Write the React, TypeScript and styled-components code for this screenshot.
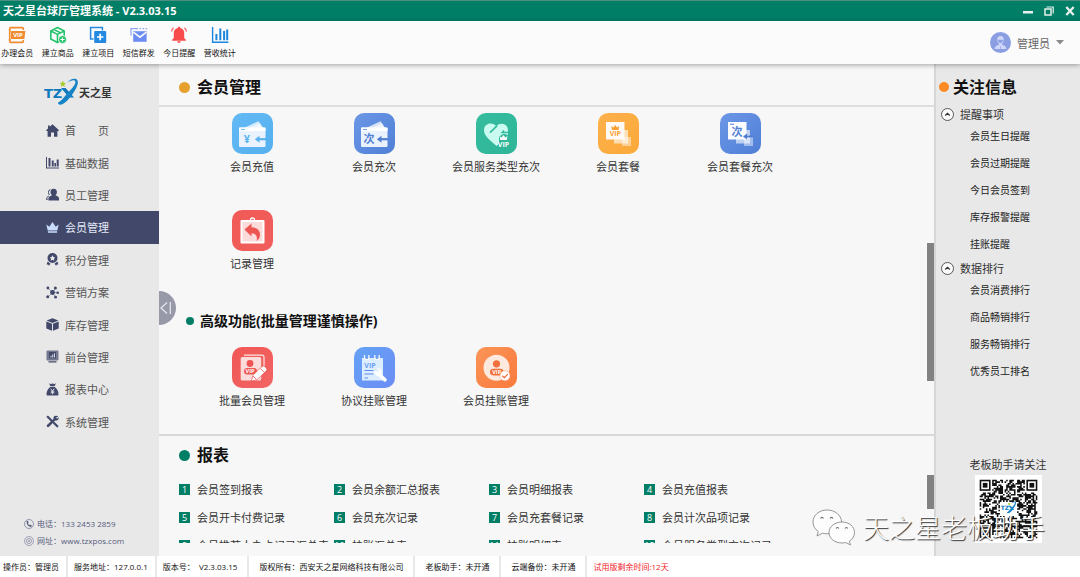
import React from 'react';
import styled, { createGlobalStyle } from 'styled-components';

const GREEN = '#007e66';
const NAVY = '#41486a';

const GlobalStyle = createGlobalStyle`
  * { box-sizing: border-box; }
  body {
    margin: 0;
    font-family: "Open Sans", "Noto Sans CJK SC", sans-serif;
    font-size: 11px;
    color: #333;
    background: #fff;
  }
  button {
    border: 0;
    padding: 0;
    background: none;
    font: inherit;
    color: inherit;
    cursor: pointer;
  }
  a { color: inherit; text-decoration: none; }
  h1, h2, h3, p, ul { margin: 0; padding: 0; }
  ul { list-style: none; }
  svg { display: block; flex: none; }
`;

const Page = styled.div`
  position: relative;
  display: flex;
  flex-direction: column;
  min-height: 100vh;
`;

/* ---------- title bar ---------- */

const TitleBar = styled.header`
  display: flex;
  align-items: center;
  justify-content: space-between;
  height: 21px;
  padding: 0 3px;
  background: ${GREEN};
  border-top: 1px solid #4c8f80;
  color: #fff;
`;

const AppTitle = styled.h1`
  font-size: 11px;
  line-height: 20px;
  font-weight: 700;
  white-space: nowrap;
`;

const WindowButtons = styled.div`
  display: flex;
  gap: 7px;
`;

const WindowButton = styled.button`
  display: flex;
  align-items: center;
  justify-content: center;
  width: 14px;
  height: 16px;
  color: #e8efed;
`;

/* ---------- toolbar ---------- */

const Toolbar = styled.div`
  position: relative;
  z-index: 2;
  display: flex;
  align-items: center;
  justify-content: space-between;
  height: 43px;
  background: #fbfbfb;
  box-shadow: 0 1px 5px rgba(0, 0, 0, 0.35);
`;

const ToolList = styled.div`
  display: grid;
  grid-template-columns: repeat(6, 1fr);
  width: 243px;
  margin-left: -3px;
`;

const Tool = styled.button`
  display: flex;
  flex-direction: column;
  align-items: center;
  gap: 3px;
  font-size: 8px;
  line-height: 12px;
  color: #111;
  white-space: nowrap;
`;

const UserMenu = styled.button`
  display: flex;
  align-items: center;
  gap: 6px;
  margin-right: 16px;
  color: #666;
`;

/* ---------- body ---------- */

const Body = styled.div`
  display: grid;
  grid-template-columns: 159px minmax(0, 1fr) 146px;
  flex: 1;
`;

const Sidebar = styled.aside`
  display: flex;
  flex-direction: column;
  background: #e8e8e8;
`;

const Brand = styled.div`
  display: flex;
  align-items: center;
  height: 50px;
  padding: 5px 0 0 44px;
  font-weight: 600;
  color: #333;
`;

const Nav = styled.nav`
  display: grid;
  grid-auto-rows: 1fr;
  height: 324px;
`;

const NavItem = styled.a<{ $active?: boolean }>`
  display: flex;
  align-items: center;
  gap: 6px;
  padding-left: 46px;
  white-space: pre;
  background: ${(p) => (p.$active ? NAVY : 'transparent')};
  color: ${(p) => (p.$active ? '#e6ebf8' : '#555')};
  svg { color: ${(p) => (p.$active ? '#c9dcff' : NAVY)}; }
`;

const Contact = styled.address`
  display: flex;
  flex-direction: column;
  gap: 5px;
  margin-top: auto;
  padding: 0 0 9px 24px;
  font-style: normal;
  font-size: 8px;
  line-height: 12px;
  color: #555b7c;
`;

const ContactLine = styled.div`
  display: flex;
  align-items: center;
  gap: 3px;
`;

const Main = styled.main`
  position: relative;
  display: flex;
  flex-direction: column;
  padding-top: 5px;
  background: #f7f7f7;
`;

const CollapseHandle = styled.button`
  position: absolute;
  left: 0;
  top: 227px;
  display: flex;
  align-items: center;
  justify-content: flex-start;
  width: 17px;
  height: 34px;
  border-radius: 0 17px 17px 0;
  background: #9799a9;
  color: #e4e5ec;
`;

const SectionTitle = styled.h2`
  display: flex;
  align-items: center;
  gap: 7px;
  padding-left: 20px;
  font-size: 16px;
  line-height: 36px;
  font-weight: 700;
  color: #111;
`;

const Dot = styled.span<{ $color: string; $size: number }>`
  flex: none;
  width: ${(p) => p.$size}px;
  height: ${(p) => p.$size}px;
  border-radius: 50%;
  background: ${(p) => p.$color};
`;

const Scroller = styled.div`
  display: flex;
  justify-content: space-between;
`;

const AppsScroller = styled(Scroller)`
  height: 331px;
  margin-bottom: 1px;
  border-top: 2px solid #dedede;
  border-bottom: 2px solid #d8d8d8;
`;

const ReportsScroller = styled(Scroller)`
  height: 70px;
  padding-top: 2px;
  overflow: hidden;
`;

const ScrollContent = styled.div`
  flex: 1;
`;

const Thumb = styled.div<{ $top: number; $height: number }>`
  width: 7px;
  height: ${(p) => p.$height}px;
  margin-top: ${(p) => p.$top}px;
  background: #828282;
`;

const AppGrid = styled.div`
  display: grid;
  grid-template-columns: repeat(auto-fill, 122px);
  grid-auto-rows: 97px;
  padding: 6px 100px 0 32px;
`;

const AppTile = styled.button`
  display: flex;
  flex-direction: column;
  align-items: center;
  align-self: start;
  gap: 5px;
  line-height: 16px;
  white-space: nowrap;
`;

const SubTitle = styled.h3`
  display: flex;
  align-items: center;
  gap: 6px;
  padding: 0 0 6px 27px;
  font-size: 14px;
  line-height: 28px;
  font-weight: 700;
  color: #111;
`;

const ReportGrid = styled.ul`
  display: grid;
  grid-template-columns: repeat(auto-fill, 155px);
  grid-auto-rows: 28px;
  padding-left: 20px;
`;

const ReportLink = styled.a`
  display: flex;
  align-items: center;
  gap: 7px;
  height: 28px;
  white-space: nowrap;
`;

const ReportNo = styled.span`
  width: 11px;
  height: 11px;
  font-size: 9px;
  line-height: 11px;
  text-align: center;
  color: #fff;
  background: ${GREEN};
`;

/* ---------- right panel ---------- */

const InfoPanel = styled.aside`
  display: flex;
  flex-direction: column;
  padding: 5px 0 13px;
  background: #e8e8e8;
  border-left: 2px solid #d6d6d6;
`;

const InfoTitle = styled.h2`
  display: flex;
  align-items: center;
  gap: 4px;
  padding-left: 3px;
  font-size: 16px;
  line-height: 36px;
  font-weight: 700;
  color: #111;
`;

const GroupButton = styled.button`
  display: flex;
  align-items: center;
  gap: 6px;
  height: 18px;
  padding-left: 5px;
`;

const GroupList = styled.ul`
  padding-left: 34px;
  margin-bottom: 1px;
  font-size: 10px;
  line-height: 27px;
  color: #222;
`;

const FollowCard = styled.section`
  display: flex;
  flex-direction: column;
  align-items: center;
  align-self: center;
  gap: 2px;
  margin-top: auto;
  line-height: 16px;
`;

/* ---------- status bar ---------- */

const StatusBar = styled.footer`
  display: flex;
  height: 21px;
  background: #fff;
  font-size: 8px;
  line-height: 21px;
  color: #111;
  white-space: pre;
`;

const StatusCell = styled.span<{ $left: number; $right?: number; $alert?: boolean }>`
  padding: 0 ${(p) => p.$right ?? 10}px 0 ${(p) => p.$left}px;
  border-right: ${(p) => (p.$alert ? '0' : '2px solid #e8e8e8')};
  color: ${(p) => (p.$alert ? '#f2201c' : 'inherit')};
`;

const Watermark = styled.div`
  position: absolute;
  right: 35px;
  bottom: 30px;
  z-index: 3;
  display: flex;
  align-items: center;
  gap: 8px;
  font-size: 26px;
  line-height: 38px;
  font-weight: 300;
  color: #fff;
  text-shadow: 1px 1px 1px #333;
  white-space: nowrap;
  pointer-events: none;
`;

/* ---------- drawings ---------- */

const VipText = ({ x, y, size, fill }: { x: number; y: number; size: number; fill: string }) => (
  <text x={x} y={y} fontSize={size} fontWeight="700" textAnchor="middle" fill={fill}>VIP</text>
);

const toolIcons = {
  vip: (
    <svg width="18" height="18" viewBox="0 0 18 18">
      <path d="M1.7 5V2.6q0-1 1-1h11.600q1 0 1 1V4M1.7 13v2.400q0 1 1 1h11.600q1 0 1-1V14" fill="none" stroke="#f08c2e" strokeWidth="1.600" />
      <path d="M1.7 3v12" stroke="#f08c2e" strokeWidth="1.600" />
      <path d="M3 5h14.400l-1 8H3z" fill="#f08c2e" />
      <VipText x={10} y={11.4} size={6} fill="#fff" />
    </svg>
  ),
  goods: (
    <svg width="18" height="18" viewBox="0 0 18 18" fill="none" stroke="#23c36b" strokeWidth="1.600" strokeLinejoin="round">
      <path d="M10 15.600l-1.500.9L1.800 13V5L8.500 1.500 15.200 5v5M1.800 5l6.700 3.400L15.200 5M8.500 8.400v8M5 3.500l6.600 3.400" />
      <circle cx="13.500" cy="13.500" r="4" fill="#23c36b" stroke="#fbfbfb" strokeWidth=".8" />
      <path d="M13.500 11.400v4.200M11.400 13.500h4.200" stroke="#fff" strokeWidth="1.100" />
    </svg>
  ),
  project: (
    <svg width="18" height="18" viewBox="0 0 18 18">
      <path d="M4.500 13H1.600V1.600h11.800v3" fill="none" stroke="#2489e0" strokeWidth="1.500" />
      <rect x="5.200" y="5" width="12" height="12" rx="1" fill="#2489e0" />
      <path d="M11.200 7.800v6.400M8 11h6.400" stroke="#fff" strokeWidth="1.700" />
    </svg>
  ),
  sms: (
    <svg width="18" height="18" viewBox="0 0 18 18">
      <path d="M3.200 5.200h13.400v10.600H3.200z" fill="#6d8df2" />
      <path d="M3.400 6.200l6.500 5 6.500-5" fill="none" stroke="#fbfbfb" strokeWidth="1.500" />
      <path d="M1 9.500V2.600h7M9.500 2.600h1.600M12.600 2.600h1.600M15.600 2.600h1.600" fill="none" stroke="#8fa5f3" strokeWidth="1.300" />
    </svg>
  ),
  bell: (
    <svg width="18" height="18" viewBox="0 0 18 18">
      <path d="M9 .8c.8 0 1.200.5 1.200 1.200 2.700.6 4 2.500 4 5V12l1.600 1.800v1H2.200v-1L3.800 12V7c0-2.500 1.300-4.400 4-5 0-.7.4-1.200 1.200-1.200z" fill="#f84c4c" />
      <path d="M7 15.300h4q-.5 1.700-2 1.700t-2-1.700z" fill="#f84c4c" />
      <path d="M3.600 1.800Q1.900 3.200 1.500 5.600M14.400 1.800q1.700 1.400 2.100 3.800" fill="none" stroke="#fa6a6a" strokeWidth="1.300" />
    </svg>
  ),
  stats: (
    <svg width="18" height="18" viewBox="0 0 18 18" fill="none" stroke="#1b86dc">
      <path d="M1.600 1v15.300h15.800" strokeWidth="1.400" />
      <path d="M5.400 8v6.200M9.300 2.500v11.700M13.100 5v9.200M16.200 3.500v10.700" strokeWidth="2" />
    </svg>
  ),
};

const NavSvg = ({ children }: { children: React.ReactNode }) => (
  <svg width="13" height="13" viewBox="0 0 13 13" fill="currentColor">{children}</svg>
);

const navIcons = {
  home: <NavSvg><path d="M6.500.3L13 6.200l-.7.9h-.9v5.600H8V8.600H5v4.100H1.600V7.100H.7L0 6.200l2-1.800V1.500h1.800v1.300z" /></NavSvg>,
  data: (
    <NavSvg>
      <path d="M0 1h1v10.500h12v1H0z" />
      <path d="M2.500 2h2v8.600h-2zM5.800 4.500h1.900v6.100H5.800zM8.400 7H10v3.600H8.400zM10.700 3.500h2v7.100h-2z" />
    </NavSvg>
  ),
  staff: (
    <NavSvg>
      <path d="M7.700.8c2.200 0 3.200 1.400 3.200 3.100 0 1.300-.5 2.300-1.200 2.900v.8c2.100.6 3.300 1.500 3.300 3v1.800H2.400v-1.800c0-1.500 1.300-2.400 3.400-3v-.8C5 6.200 4.500 5.200 4.500 3.900 4.500 2.200 5.500.8 7.700.8z" />
      <path d="M4.400 1.500Q2.200 2 2.500 4.500 2.600 6 3.400 7M2.800 8Q.5 8.800.5 11.500h1.200" fill="none" stroke="currentColor" strokeWidth="1" />
    </NavSvg>
  ),
  crown: <NavSvg><path d="M.3 3.600l3 2.200L6.500 1l3.200 4.800 3-2.200-1.400 6H1.700zM1.900 10.300h9.200v1.500H1.900z" /></NavSvg>,
  points: (
    <NavSvg>
      <path fillRule="evenodd" d="M6.500 0a5 5 0 110 10 5 5 0 010-10zm0 2.300L5.600 4.100l-1.900.3L5 5.800l-.3 1.900 1.800-.9 1.800.9L8 5.800l1.300-1.400-1.900-.3z" />
      <path d="M1.700 8.500l2.800 2.300-1.600 1.900-.8-1.300-1.600.1zM11.300 8.500l-2.800 2.300 1.600 1.900.8-1.300 1.600.1z" />
    </NavSvg>
  ),
  marketing: (
    <NavSvg>
      <path d="M6.500 6.500L2 2.200M6.500 6.500l2.700-4M6.500 6.500L2 10.800M6.500 6.500l3 4.400M6.500 6.500H12" fill="none" stroke="currentColor" strokeWidth=".5" />
      <circle cx="6.500" cy="6.500" r="2.400" />
      <circle cx="1.900" cy="2" r="1.400" /><circle cx="9.400" cy="2" r="1.500" />
      <circle cx="1.700" cy="10.800" r="1.500" /><circle cx="9.600" cy="11.200" r="1.400" /><circle cx="11.700" cy="6.700" r="1.300" />
    </NavSvg>
  ),
  stock: (
    <NavSvg>
      <path d="M6.500.3l5.900 2.300-5.900 2.300L.6 2.600zM.3 3.500L6 5.700v7L.3 10.400zM12.700 3.500L7 5.700v7l5.700-2.300z" />
    </NavSvg>
  ),
  desk: (
    <NavSvg>
      <path fillRule="evenodd" d="M1.500.5h10q1 0 1 1v8q0 1-1 1h-10q-1 0-1-1v-8q0-1 1-1zM2.500 2v6.800h8V2z" opacity=".7" />
      <path d="M2.500 2h8v6.800h-8zM2.500 11.300h8v1.200h-8z" />
      <path d="M4.500 5.800h1v1.700h-1zM6.200 4.600h1v2.900h-1zM7.900 3.300h1v4.200h-1z" fill="#dfe2ec" />
    </NavSvg>
  ),
  report: (
    <NavSvg>
      <path d="M3 .3l2 1 1.500-1 1.500 1 2-1-1.400 3H4.400zM4.200 4h4.600c2.400 2 3.700 4.600 3.700 7.200 0 .9-.5 1.300-1.300 1.300H1.800C1 12.500.5 12.100.5 11.200.5 8.600 1.800 6 4.200 4z" />
      <path d="M4.700 5.700l1.800 2.200 1.800-2.200M6.500 7.900v3.400M4.700 8.200h3.600M4.700 9.700h3.600" fill="none" stroke="#e8e8e8" strokeWidth=".9" />
    </NavSvg>
  ),
  system: (
    <NavSvg>
      <path d="M1.700 1.800l4 4M8 8l3.300 3.300" fill="none" stroke="currentColor" strokeWidth="2.200" strokeLinecap="round" />
      <path d="M8.500 1.100Q11 .2 12.400 1.600L10.300 2.300l.2 1 1 .2 1-1.500q.7 2.800-1.600 3.500-.9.200-1.600-.1L3 11.800q-1 .8-1.900-.1-.8-1 .1-1.900L7.500 4q-.4-1.900 1-2.900z" />
    </NavSvg>
  ),
};

const TileSvg = ({ id, from, to, children }: { id: string; from: string; to: string; children: React.ReactNode }) => (
  <svg width="41" height="41" viewBox="0 0 41 41">
    <defs>
      <linearGradient id={id} x1="0" y1="0" x2="1" y2="1">
        <stop offset="0" stopColor={from} />
        <stop offset="1" stopColor={to} />
      </linearGradient>
    </defs>
    <rect width="41" height="41" rx="10" fill={`url(#${id})`} />
    {children}
  </svg>
);

const CardBody = ({ mark, color }: { mark: string; color: string }) => (
  <>
    <path d="M12 15L26.500 8.200 31 15z" fill="#fff" opacity=".75" />
    <path d="M18 15l10-4.800L31 15z" fill="#fff" opacity=".6" />
    <rect x="7" y="14.500" width="26.500" height="19.500" rx="1" fill="#eaf3fd" />
    <path d="M8 14.500h24.500q1 0 1 1V18H7v-2.500q0-1 1-1z" fill="#fff" />
    <path d="M9 16.500h4" stroke={color} strokeWidth=".8" />
    <text x="15" y="30" fontSize="11" fontWeight="700" textAnchor="middle" fill={color}>{mark}</text>
    <path d="M34 26.200h-7" stroke={color} strokeWidth="2.200" />
    <path d="M22.800 26.200l4.700-3.500v7z" fill={color} />
  </>
);

const crown = 'M0 0l2.200 1.600L4 -1l1.800 2.600L8 0 7.200 4H.8z';

const tileIcons = {
  recharge: <TileSvg id="t1" from="#63b9f4" to="#55b0ef"><CardBody mark="¥" color="#5ab3f0" /></TileSvg>,
  times: <TileSvg id="t2" from="#6c97e6" to="#4f7fd6"><CardBody mark="次" color="#5480d4" /></TileSvg>,
  service: (
    <TileSvg id="t3" from="#35bd9e" to="#2fb498">
      <path d="M20.300 13.200C17 9 8 9.500 8 17.500c0 5 5.500 9.500 12.500 15.500 1-1 2-1.800 2.500-2.500v-7l9-5.500c.5-8-8.500-9-11.700-4.800z" fill="#c9fbf0" />
      <path d="M14.500 19.200l6.200-6" stroke="#35bd9e" strokeWidth="1.700" strokeLinecap="round" />
      <path d="M32 18v4l-5.500-1.800z" fill="#c9fbf0" />
      <path d="M32 19.500h-6l2-2" stroke="#35bd9e" strokeWidth="1.400" fill="none" />
      <path d={crown} transform="translate(23.500 23)" fill="#fff" />
      <VipText x={27.500} y={33.700} size={7} fill="#fff" />
    </TileSvg>
  ),
  combo: (
    <TileSvg id="t4" from="#fdb14b" to="#fba93a">
      <path d="M24 24h9v9h-9z" fill="#fff" opacity=".45" />
      <path d="M16 17h14v13.500H16z" fill="#fff" opacity=".6" />
      <path d="M8 9h18.500v17.500H8z" fill="#fffaf4" />
      <path d={crown} transform="translate(13.300 13)" fill="#f9a233" />
      <VipText x={17.300} y={22.800} size={7} fill="#f9a233" />
    </TileSvg>
  ),
  comboTimes: (
    <TileSvg id="t5" from="#6c97e6" to="#4f7fd6">
      <path d="M24 24h9v9h-9z" fill="#fff" opacity=".45" />
      <path d="M16 17h14v13.500H16z" fill="#fff" opacity=".6" />
      <path d="M8 9h18.500v17.500H8z" fill="#fafcff" />
      <path d="M10 11.200h4" stroke="#5480d4" strokeWidth="1" />
      <text x="17" y="22.500" fontSize="11" fontWeight="700" textAnchor="middle" fill="#5480d4">次</text>
      <path d="M33 23.500h-7" stroke="#4f7cd2" strokeWidth="1.700" />
      <path d="M23 23.500l4-3v6z" fill="#4f7cd2" />
    </TileSvg>
  ),
  record: (
    <TileSvg id="t6" from="#f15a57" to="#f05e5b">
      <path d="M18.500 10a2 2 0 014 0" fill="none" stroke="#fff" strokeWidth="1.300" />
      <rect x="8.500" y="10" width="24" height="23.500" rx="1" fill="#fff" />
      <rect x="10.500" y="12" width="20" height="19.500" fill="#fbdcdb" />
      <path d="M12.500 19.500l7-6v3.700c6 .3 9 4 8.500 8.300-.3 2.500-1.500 4-3.500 5.500 1.200-4.500-.5-7.500-5-7.700v3.200z" fill="#ee5653" />
    </TileSvg>
  ),
  batch: (
    <TileSvg id="t7" from="#f05856" to="#f16462">
      <path d="M12 8.200h18q2 0 2 2V24" fill="none" stroke="#fff" strokeWidth="1.200" opacity=".85" />
      <rect x="8.700" y="10" width="20.500" height="23.500" rx="1.500" fill="#fbdcdb" />
      <circle cx="18" cy="16.500" r="3.400" fill="#ee5653" />
      <rect x="12" y="21" width="13" height="6.500" rx="3.200" fill="#ee5653" />
      <VipText x={18} y={26.200} size={5.500} fill="#fff" />
      <path d="M19.500 34l1.300-5.700L30 19.500q1.500-1.300 3 .2l1.300 1.300q1.200 1.500 0 2.800L25 32.800z" fill="#fff" stroke="#ee5653" strokeWidth=".7" />
      <path d="M28.500 21.500l3.800 4M21 29l3.500 3.500" stroke="#ee5653" strokeWidth=".8" />
    </TileSvg>
  ),
  agreement: (
    <TileSvg id="t8" from="#64a3f5" to="#6c8cf5">
      <path d="M8 11h21v22.500H8z" fill="#dcedff" />
      <path d="M10.500 8v2.500a2.200 2.200 0 004.400 0V8M20.800 8v2.500a2.200 2.200 0 004.400 0V8" fill="#67a0f5" stroke="#fff" strokeWidth="1.200" />
      <VipText x={16} y={21} size={7} fill="#6a9ff5" />
      <path d="M10.500 23.500h9M10.500 27h9M10.500 31h3.500" stroke="#5b8cf0" strokeWidth="1.100" />
      <path d="M23.500 26L31 32.800" stroke="#fff" strokeWidth="3.600" strokeLinecap="round" />
      <path d="M20 23.500l3 2.300 1.800-.6.300-1.900-2.600-2q3.500-.6 5 2 1 2.500-.8 4.700-2.500 1.500-4.800.3-2.300-1.700-1.900-4.800z" fill="#fff" />
    </TileSvg>
  ),
  credit: (
    <TileSvg id="t9" from="#fb9558" to="#f9793c">
      <circle cx="20.500" cy="20.800" r="13" fill="#fde9de" />
      <circle cx="20.500" cy="16.800" r="3.600" fill="#f2703c" />
      <rect x="14" y="21.700" width="13.500" height="6.700" rx="3.300" fill="#f2703c" />
      <VipText x={20.700} y={27} size={5.500} fill="#fff" />
      <circle cx="29" cy="28.800" r="5" fill="#fff" stroke="#f7a67f" strokeWidth=".6" />
      <path d="M26.300 28.800l2 2 3.500-3.700" fill="none" stroke="#f2703c" strokeWidth="1.300" />
    </TileSvg>
  ),
};

const LogoMark = ({ width, height }: { width: number; height: number }) => (
  <svg width={width} height={height} viewBox="0 0 35 28">
    <text x="0" y="19.500" fontSize="13" fontWeight="700" fontFamily="'DejaVu Sans', sans-serif" fill="#0f78be">TZ</text>
    <path d="M17 10h4.500l8.500 9.500h-4.800z" fill="#0f78be" />
    <path d="M14 24.500c2.500-1 5-3.800 7.500-7 3-4 6.500-6.500 9-10.500 1.800-3.200.8-5-2-4.600-2 .3-3.800 1.200-5.200 2.400C25 2 28.500.4 31 .7c3 .4 3.600 3.600 2 7.500-1.600 4-4.500 8-7.500 11.800-3.300 4-6.500 6.800-9.500 6.700-1.200 0-2-.8-2-2.200z" fill="#1583c6" />
    <path d="M18.800 2.800l1 2 2.200.3-1.600 1.500.4 2.200-2-1-2 1 .4-2.200-1.600-1.500 2.200-.3z" fill="#a6cc2c" />
  </svg>
);

const QR_SIZE = 37;

const inFinder = (x: number, y: number) =>
  (x < 8 && y < 8) || (x >= QR_SIZE - 8 && y < 8) || (x < 8 && y >= QR_SIZE - 8);

const qrPath = (() => {
  let seed = 20317;
  let d = '';
  for (let y = 0; y < QR_SIZE; y++) {
    for (let x = 0; x < QR_SIZE; x++) {
      seed = (seed * 1103515245 + 12345) % 2147483648;
      const centre = x > 12 && x < 24 && y > 13 && y < 23;
      if (!inFinder(x, y) && !centre && seed / 2147483648 > 0.47) d += `M${x} ${y}h1v1h-1z`;
    }
  }
  return d;
})();

const QrCode = () => (
  <svg width="67" height="68" viewBox="-3 -3 43 43" preserveAspectRatio="none" role="img" aria-label="老板助手二维码">
    <rect x="-3" y="-3" width="43" height="43" fill="#fff" />
    <path d={qrPath} fill="#111" />
    {[[0, 0], [QR_SIZE - 7, 0], [0, QR_SIZE - 7]].map(([x, y]) => (
      <g key={`${x}-${y}`} transform={`translate(${x} ${y})`}>
        <rect x=".5" y=".5" width="6" height="6" fill="#fff" stroke="#111" />
        <rect x="2" y="2" width="3" height="3" fill="#111" />
      </g>
    ))}
    <g transform="translate(13.500 13.500) scale(.29)">
      <LogoMark width={35} height={28} />
    </g>
  </svg>
);

const WechatIcon = () => (
  <svg width="43" height="38" viewBox="0 0 43 38">
    <g fill="#fdfdfd" stroke="#8a8a8a" strokeWidth=".9">
      <path d="M15 1C7 1 1 6.300 1 13c0 4 2 7.200 5.300 9.500L5 27l5.500-2.800c1.500.4 3 .6 4.500.6 8 0 14.500-5 14.500-11.800S23 1 15 1z" />
      <path d="M30 13c-7 0-13 4.500-13 10.600S23 34 30 34c1.300 0 2.600-.1 3.800-.5L38.500 36l-1.200-3.800C40.500 30.300 42.500 27.300 42.500 23.600 42.500 17.500 37 13 30 13z" />
    </g>
    <path d="M8.500 9.500q1.500-2.200 3 0M18 9.500q1.500-2.200 3 0M24 19.500q1.400-2 2.800 0M33 19.500q1.400-2 2.800 0" fill="none" stroke="#777" strokeWidth="1.100" />
  </svg>
);

const ChevronCircle = () => (
  <svg width="13" height="13" viewBox="0 0 13 13" fill="#fafafa" stroke="#333">
    <circle cx="6.500" cy="6.500" r="6" strokeWidth=".8" />
    <path d="M4.200 7.500l2.300-2.200 2.300 2.200" fill="none" strokeWidth="1.200" />
  </svg>
);

/* ---------- data ---------- */

const tools: [keyof typeof toolIcons, string][] = [
  ['vip', '办理会员'], ['goods', '建立商品'], ['project', '建立项目'],
  ['sms', '短信群发'], ['bell', '今日提醒'], ['stats', '营收统计'],
];

const navItems: [keyof typeof navIcons, string][] = [
  ['home', '首\u3000\u3000页'], ['data', '基础数据'], ['staff', '员工管理'], ['crown', '会员管理'],
  ['points', '积分管理'], ['marketing', '营销方案'], ['stock', '库存管理'], ['desk', '前台管理'],
  ['report', '报表中心'], ['system', '系统管理'],
];

const apps: [keyof typeof tileIcons, string][] = [
  ['recharge', '会员充值'], ['times', '会员充次'], ['service', '会员服务类型充次'],
  ['combo', '会员套餐'], ['comboTimes', '会员套餐充次'], ['record', '记录管理'],
];

const advancedApps: [keyof typeof tileIcons, string][] = [
  ['batch', '批量会员管理'], ['agreement', '协议挂账管理'], ['credit', '会员挂账管理'],
];

const reports = [
  '会员签到报表', '会员余额汇总报表', '会员明细报表', '会员充值报表',
  '会员开卡付费记录', '会员充次记录', '会员充套餐记录', '会员计次品项记录',
  '会员推荐人办卡记录汇总表', '挂账汇总表', '挂账明细表', '会员服务类型充次记录',
];

const infoGroups = [
  { title: '提醒事项', items: ['会员生日提醒', '会员过期提醒', '今日会员签到', '库存报警提醒', '挂账提醒'] },
  { title: '数据排行', items: ['会员消费排行', '商品畅销排行', '服务畅销排行', '优秀员工排名'] },
];

export default function App() {
  return (
    <Page>
      <GlobalStyle />
      <TitleBar>
        <AppTitle>天之星台球厅管理系统 - V2.3.03.15</AppTitle>
        <WindowButtons>
          <WindowButton aria-label="最小化">
            <svg width="10" height="10" viewBox="0 0 10 10"><path d="M0 5h10v2.500H0z" fill="currentColor" /></svg>
          </WindowButton>
          <WindowButton aria-label="还原">
            <svg width="10" height="10" viewBox="0 0 10 10" fill="none" stroke="currentColor">
              <path d="M1 3h6v6H1z" strokeWidth="1.500" /><path d="M2.500 1h6.700v6.500" strokeWidth="1.200" />
            </svg>
          </WindowButton>
          <WindowButton aria-label="关闭">
            <svg width="10" height="10" viewBox="0 0 10 10"><path d="M1.300 1l7.400 8M8.700 1L1.300 9" stroke="currentColor" strokeWidth="2.300" /></svg>
          </WindowButton>
        </WindowButtons>
      </TitleBar>

      <Toolbar>
        <ToolList>
          {tools.map(([icon, label]) => (
            <Tool key={label}>{toolIcons[icon]}{label}</Tool>
          ))}
        </ToolList>
        <UserMenu>
          <svg width="21" height="21" viewBox="0 0 21 21">
            <circle cx="10.500" cy="10.500" r="10.500" fill="#8b9ee2" />
            <path d="M7.300 7.500q0-3.600 3.200-3.600t3.200 3.600q0 3.300-1.700 4.300v1q4 .8 4.500 4.200h-12q.5-3.400 4.500-4.200v-1Q7.300 10.800 7.300 7.500z" fill="#cfd8f8" />
            <path d="M8.300 8q2.200.3 4.400 0-.2 2.800-2.200 2.800T8.300 8zM10.500 14v3" fill="#8b9ee2" stroke="#8b9ee2" strokeWidth=".6" />
          </svg>
          管理员
          <svg width="8" height="5" viewBox="0 0 8 5"><path d="M0 0h8L4 4.500z" fill="#8a8a8a" /></svg>
        </UserMenu>
      </Toolbar>

      <Body>
        <Sidebar>
          <Brand><LogoMark width={35} height={28} />天之星</Brand>
          <Nav>
            {navItems.map(([icon, label]) => (
              <NavItem key={icon} href={`#${icon}`} $active={icon === 'crown'}>{navIcons[icon]}{label}</NavItem>
            ))}
          </Nav>
          <Contact>
            <ContactLine>
              <svg width="10" height="10" viewBox="0 0 10 10">
                <circle cx="5" cy="5" r="4.500" fill="none" stroke="#7d829c" strokeWidth=".8" />
                <path d="M2.500 2.300l1.200-.5 1 1.700-.8.700q.5 1.300 1.700 2l.9-.6 1.400 1.200-.8 1.200Q3 8 2.500 2.300z" fill="#555b7c" />
              </svg>
              电话：133 2453 2859
            </ContactLine>
            <ContactLine>
              <svg width="10" height="10" viewBox="0 0 10 10" fill="none" stroke="#8e92a8" strokeWidth=".8">
                <circle cx="5" cy="5" r="4.500" /><circle cx="5" cy="5" r="2.600" /><circle cx="5" cy="5" r=".9" />
              </svg>
              <span>网址：<a href="#site">www.tzxpos.com</a></span>
            </ContactLine>
          </Contact>
        </Sidebar>

        <Main>
          <SectionTitle><Dot $color="#e6a02e" $size={11} />会员管理</SectionTitle>
          <AppsScroller>
            <ScrollContent>
              <AppGrid>
                {apps.map(([icon, label]) => (
                  <AppTile key={label}>{tileIcons[icon]}{label}</AppTile>
                ))}
              </AppGrid>
              <SubTitle><Dot $color={GREEN} $size={8} />高级功能(批量管理谨慎操作)</SubTitle>
              <AppGrid>
                {advancedApps.map(([icon, label]) => (
                  <AppTile key={label}>{tileIcons[icon]}{label}</AppTile>
                ))}
              </AppGrid>
            </ScrollContent>
            <Thumb $top={136} $height={138} />
          </AppsScroller>
          <SectionTitle><Dot $color={GREEN} $size={11} />报表</SectionTitle>
          <ReportsScroller>
            <ScrollContent>
              <ReportGrid>
                {reports.map((label, i) => (
                  <li key={label}>
                    <ReportLink href={`#report-${i + 1}`}><ReportNo>{i + 1}</ReportNo>{label}</ReportLink>
                  </li>
                ))}
              </ReportGrid>
            </ScrollContent>
            <Thumb $top={0} $height={34} />
          </ReportsScroller>
          <CollapseHandle aria-label="收起菜单">
            <svg width="13" height="14" viewBox="0 0 13 14" fill="none" stroke="currentColor" strokeWidth="1.300">
              <path d="M8 1.500L2 7l6 5.500M11.300 1v12" />
            </svg>
          </CollapseHandle>
        </Main>

        <InfoPanel>
          <InfoTitle><Dot $color="#fb8a24" $size={10} />关注信息</InfoTitle>
          {infoGroups.map((group) => (
            <React.Fragment key={group.title}>
              <GroupButton><ChevronCircle />{group.title}</GroupButton>
              <GroupList>
                {group.items.map((item) => <li key={item}><a href="#info">{item}</a></li>)}
              </GroupList>
            </React.Fragment>
          ))}
          <FollowCard>老板助手请关注<QrCode /></FollowCard>
        </InfoPanel>
      </Body>

      <StatusBar>
        <StatusCell $left={3} $right={7}>操作员：管理员</StatusCell>
        <StatusCell $left={6} $right={7}>服务地址：127.0.0.1</StatusCell>
        <StatusCell $left={6}>版本号：  V2.3.03.15</StatusCell>
        <StatusCell $left={10}>版权所有：西安天之星网络科技有限公司</StatusCell>
        <StatusCell $left={10}>老板助手：未开通</StatusCell>
        <StatusCell $left={10}>云端备份：未开通</StatusCell>
        <StatusCell $left={6} $alert>试用版剩余时间:12天</StatusCell>
      </StatusBar>

      <Watermark><WechatIcon />天之星老板助手</Watermark>
    </Page>
  );
}
